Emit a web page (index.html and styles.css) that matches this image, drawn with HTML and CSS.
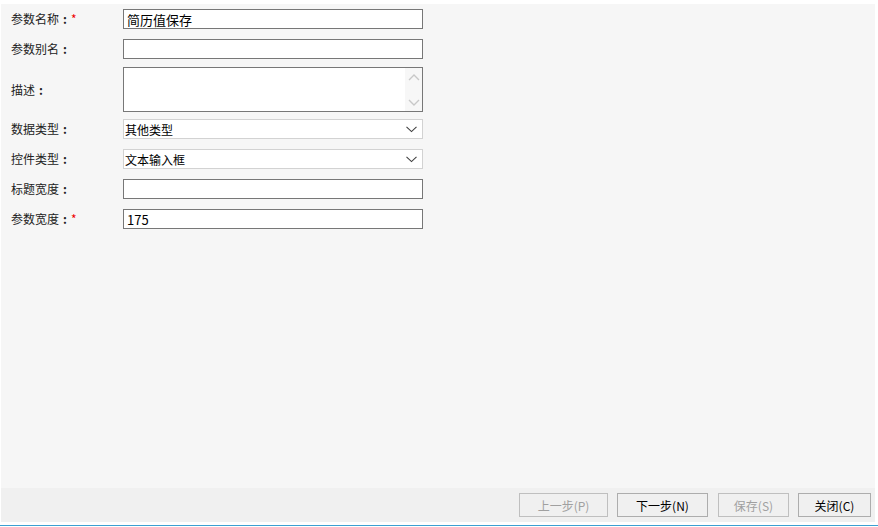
FILE: index.html
```html
<!DOCTYPE html>
<html lang="zh-CN">
<head>
    <meta charset="UTF-8">
    <title>参数设置</title>
    <link rel="stylesheet" href="styles.css">
</head>
<body>
    <div id="dialog">
        <div id="form">
            <div class="row">
                <label class="label">参数名称<span class="colon">:</span><span class="req">*</span></label>
                <input class="field" type="text" value="简历值保存">
            </div>
            <div class="row">
                <label class="label">参数别名<span class="colon">:</span></label>
                <input class="field" type="text">
            </div>
            <div class="row row-area">
                <label class="label">描述<span class="colon">:</span></label>
                <div class="area">
                    <div class="area-scroll">
                        <svg width="12" height="8" viewBox="0 0 12 8"><path d="M1 7 L6 2 L11 7" fill="none" stroke="#c8c8c8" stroke-width="1.4"/></svg>
                        <svg width="12" height="8" viewBox="0 0 12 8"><path d="M1 1 L6 6 L11 1" fill="none" stroke="#c8c8c8" stroke-width="1.4"/></svg>
                    </div>
                </div>
            </div>
            <div class="row">
                <label class="label">数据类型<span class="colon">:</span></label>
                <div class="select">
                    <span>其他类型</span>
                    <svg width="11" height="7" viewBox="0 0 11 7"><path d="M0.5 0.8 L5.5 5.6 L10.5 0.8" fill="none" stroke="#404040" stroke-width="1.1"/></svg>
                </div>
            </div>
            <div class="row">
                <label class="label">控件类型<span class="colon">:</span></label>
                <div class="select">
                    <span>文本输入框</span>
                    <svg width="11" height="7" viewBox="0 0 11 7"><path d="M0.5 0.8 L5.5 5.6 L10.5 0.8" fill="none" stroke="#404040" stroke-width="1.1"/></svg>
                </div>
            </div>
            <div class="row">
                <label class="label">标题宽度<span class="colon">:</span></label>
                <input class="field" type="text">
            </div>
            <div class="row">
                <label class="label">参数宽度<span class="colon">:</span><span class="req">*</span></label>
                <input class="field" type="text" value="175">
            </div>
        </div>
        <div id="footer">
            <button class="btn w-prev" disabled>上一步(P)</button>
            <button class="btn w-next">下一步(N)</button>
            <button class="btn w-save" disabled>保存(S)</button>
            <button class="btn w-close">关闭(C)</button>
        </div>
    </div>
    <div id="status-line"></div>
</body>
</html>
```

FILE: styles.css
```css
/* page */
body {
    margin: 0;
    background: #fff;
    font-family: "Noto Sans CJK SC", "Liberation Sans", sans-serif;
    font-size: 12px;
    color: #000;
}

#dialog {
    margin: 4px 3px 0 1px;
    background: #f6f6f6;
}

#form {
    height: 479px;
    padding-top: 5px;
    display: flex;
    flex-direction: column;
}

.row {
    display: flex;
    align-items: center;
    height: 20px;
    margin-bottom: 10px;
}

.row-area {
    height: 45px;
    margin-top: -2px;
    margin-bottom: 7px;
}

.label {
    width: 112px;
    padding-left: 10px;
    font-size: 12px;
    line-height: 20px;
    color: #222;
}

/* full-width colon, centred in its cell */
.colon {
    display: inline-block;
    width: 12px;
    text-align: center;
    font-weight: bold;
}

.req {
    color: #e00;
}

.field {
    box-sizing: border-box;
    width: 300px;
    height: 20px;
    margin: 0;
    padding: 0 3px;
    border: 1px solid #777;
    background: #fff;
    font-family: "Noto Sans CJK SC", "Liberation Sans", sans-serif;
    font-size: 13px;
    color: #000;
    outline: none;
}

.area {
    box-sizing: border-box;
    width: 300px;
    height: 45px;
    border: 1px solid #777;
    background: #fff;
    display: flex;
    justify-content: flex-end;
}

.area-scroll {
    width: 17px;
    background: #f7f7f7;
    display: flex;
    flex-direction: column;
    justify-content: space-between;
    align-items: center;
    padding: 5px 0 4px;
}

.select {
    box-sizing: border-box;
    width: 300px;
    height: 20px;
    border: 1px solid #d2d2d2;
    background: #fff;
    display: flex;
    align-items: center;
    justify-content: space-between;
    padding: 0 5px 0 1px;
    font-size: 12px;
}

/* bottom buttons */
#footer {
    height: 34px;
    background: #f0f0f0;
    display: flex;
    align-items: center;
    justify-content: flex-end;
    padding-right: 4px;
}

.btn {
    box-sizing: border-box;
    height: 24px;
    margin-left: 9px;
    padding: 0;
    border: 1px solid #adadad;
    background: #f0f0f0;
    font-family: "Noto Sans CJK SC", "Liberation Sans", sans-serif;
    font-size: 12px;
    color: #000;
}

.btn:disabled {
    border-color: #bfbfbf;
    color: #a0a0a0;
}

.w-prev { width: 89px; }
.w-next { width: 91px; }
.w-save { width: 71px; margin-left: 10px; }
.w-close { width: 73px; }

#status-line {
    margin-top: 3px;
    height: 1px;
    background: #3d9fd1;
}
```
